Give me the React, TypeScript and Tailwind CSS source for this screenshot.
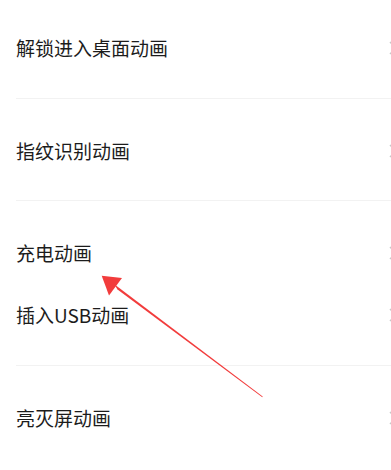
const FONT = { fontFamily: '"Noto Sans CJK SC", "Noto Sans", sans-serif' };

function Chevron() {
  // only the left tip of the chevron shows at the right edge
  return (
    <svg width="10" height="16" viewBox="0 0 10 16" className="-mr-[8px] shrink-0 text-[#c8c8c8]">
      <path d="M1 2l6 6-6 6" fill="none" stroke="currentColor" strokeWidth="1.5" />
    </svg>
  );
}

function Row({ label, className }: { label: string; className?: string }) {
  return (
    <div className={`flex items-center justify-between ${className ?? ''}`}>
      <span className="text-[19px] leading-none text-[#1c1c1c]">{label}</span>
      <Chevron />
    </div>
  );
}

export default function App() {
  return (
    <div className="relative h-[470px] w-[391px] overflow-hidden bg-white" style={FONT}>
      <div className="pl-4">
        <div className="h-[99px] border-b border-[#f2f2f2] pt-[38px]">
          <Row label="解锁进入桌面动画" />
        </div>
        <div className="h-[102px] border-b border-[#f2f2f2] pt-[42px]">
          <Row label="指纹识别动画" />
        </div>
        <div className="h-[165px] border-b border-[#f2f2f2] pt-[42px]">
          <Row label="充电动画" />
          <Row label="插入USB动画" className="mt-[43px]" />
        </div>
        <div className="pt-[42px]">
          <Row label="亮灭屏动画" />
        </div>
      </div>

      {/* red annotation arrow lying over the list */}
      <svg className="pointer-events-none absolute left-0 top-0" width="391" height="470" viewBox="0 0 391 470">
        <polygon points="101.7,275.7 122,278 109,295.5" fill="#f23c3c" />
        <polygon points="114,284 117.5,289.5 262.3,397.2 262.7,396.6" fill="#f23c3c" />
      </svg>
    </div>
  );
}
